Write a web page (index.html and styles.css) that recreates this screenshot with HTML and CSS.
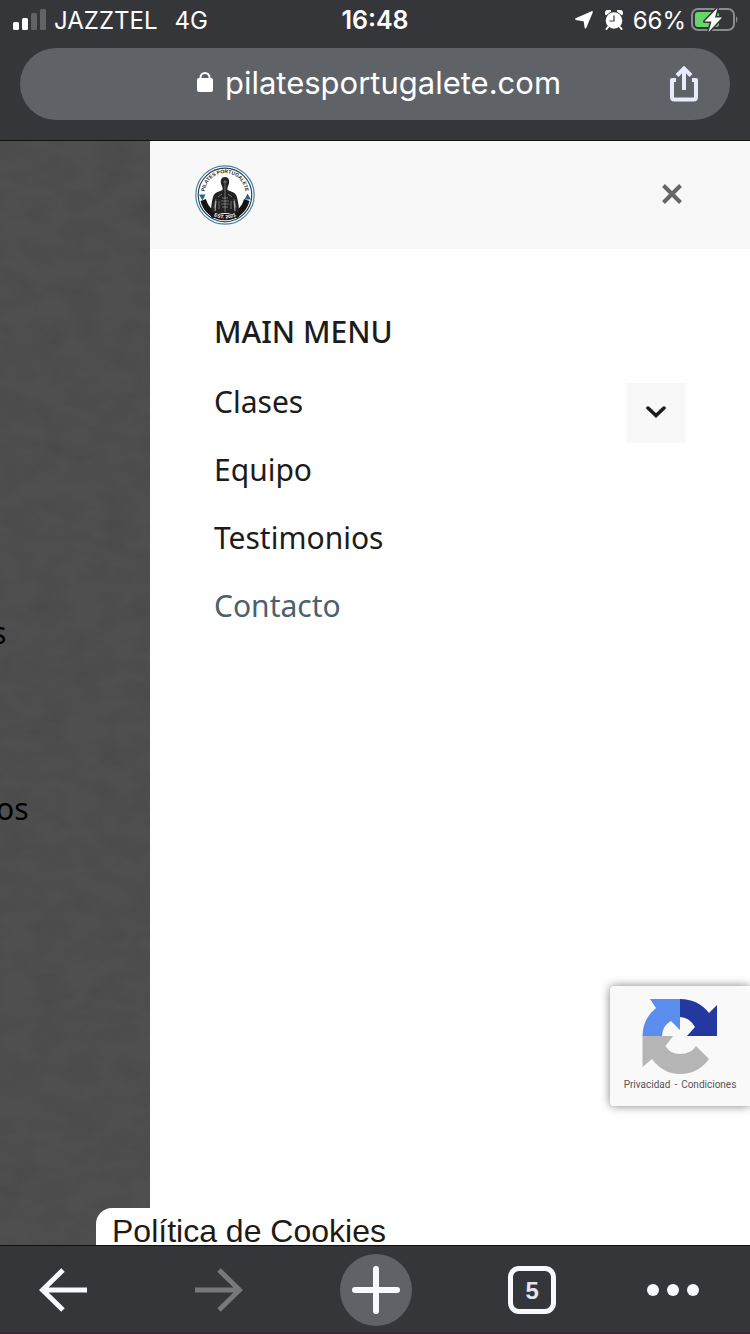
FILE: index.html
```
<!DOCTYPE html>
<html lang="es">
<head>
    <meta charset="UTF-8">
    <meta name="viewport" content="width=device-width, initial-scale=1.0">
    <title>Pilates Portugalete</title>
    <link rel="stylesheet" href="styles.css">
</head>
<body>

    <header class="browser-top">
        <div class="status-bar">
            <div class="status-left">
                <svg class="signal" width="34" height="22" viewBox="0 0 34 22">
                    <rect x="0" y="13" width="6" height="8" rx="1.5" fill="#fff"/>
                    <rect x="9" y="9" width="6" height="12" rx="1.5" fill="#fff"/>
                    <rect x="18" y="4" width="6" height="17" rx="1.5" fill="#626367"/>
                    <rect x="27" y="0" width="6" height="21" rx="1.5" fill="#626367"/>
                </svg>
                <span class="carrier">JAZZTEL</span>
                <span class="network">4G</span>
            </div>
            <span class="clock">16:48</span>
            <div class="status-right">
                <svg width="18" height="18" viewBox="0 0 18 18">
                    <path d="M17 1L10.500 16.500L9.500 9.500L1 8Z" fill="#fff" stroke="#fff" stroke-width="1.800" stroke-linejoin="round"/>
                </svg>
                <svg class="alarm" width="18" height="20" viewBox="0 0 18 20">
                    <path d="M1 5A3 3 0 0 1 6 1ZM17 5A3 3 0 0 0 12 1Z" fill="#fff" stroke="#fff"/>
                    <path d="M3 17L1.500 19M15 17L16.500 19" stroke="#fff" stroke-width="2" stroke-linecap="round"/>
                    <circle cx="9" cy="10.500" r="8.300" fill="#fff"/>
                    <path d="M9 5.500V11H4.500" fill="none" stroke="#35363a" stroke-width="1.200"/>
                </svg>
                <span class="percent">66%</span>
                <svg width="48" height="26" viewBox="0 0 48 26">
                    <rect x="1" y="2" width="42" height="21" rx="6" fill="none" stroke="#8a8b8e" stroke-width="2"/>
                    <path d="M45 9Q48 12.500 45 16Z" fill="#8a8b8e"/>
                    <rect x="4" y="5" width="24" height="15" rx="3" fill="#65d667"/>
                    <path d="M26.500 1L13.500 14.500H20.500L17.500 25L31 10.500H24Z" fill="#fff" stroke="#35363a" stroke-width="3" stroke-linejoin="round" paint-order="stroke"/>
                </svg>
            </div>
        </div>
        <div class="omnibox">
            <button class="url" type="button">
                <svg width="16" height="20" viewBox="0 0 16 20">
                    <rect x="0" y="6" width="16" height="14" rx="2" fill="#fff"/>
                    <path d="M3.500 8V5.500A4.500 4.500 0 0 1 12.500 5.500V8" fill="none" stroke="#fff" stroke-width="2"/>
                </svg>
                <span>pilatesportugalete.com</span>
            </button>
            <button class="share" type="button" aria-label="Compartir">
                <svg width="28" height="36" viewBox="0 0 28 36">
                    <path d="M6 14H2V31Q2 33.500 4.500 33.500H23.500Q26 33.500 26 31V14H22" fill="none" stroke="#e8ecfa" stroke-width="4" stroke-linejoin="round"/>
                    <path d="M14 24V3M7 9.500L14 2.500L21 9.500" fill="none" stroke="#e8ecfa" stroke-width="4"/>
                </svg>
            </button>
        </div>
    </header>

    <main class="viewport">
        <section class="page">
            <svg class="texture" width="100%" height="100%">
                <filter id="paper" x="0" y="0" width="100%" height="100%">
                    <feTurbulence type="fractalNoise" baseFrequency="0.03 0.05" numOctaves="3" seed="4"/>
                    <feColorMatrix values="0 0 0 0 0  0 0 0 0 0  0 0 0 0 0  0.12 0 0 0 -0.04"/>
                </filter>
                <rect width="100%" height="100%" filter="url(#paper)"/>
            </svg>
            <p class="page-text first">s</p>
            <p class="page-text second">os</p>
        </section>

        <aside class="drawer">
            <div class="drawer-header">
                <svg class="logo" width="60" height="60" viewBox="0 0 60 60">
                    <defs>
                        <path id="arc-top" d="M10.500 35A20.500 20.500 0 1 1 49.500 35"/>
                        <path id="arc-bottom" d="M10 43.500A25 25 0 0 0 50 43.500"/>
                        <clipPath id="logo-clip"><circle cx="30" cy="30" r="26"/></clipPath>
                    </defs>
                    <circle cx="30" cy="30" r="29.200" fill="#fff" stroke="#4d7f9f" stroke-width="1.200"/>
                    <circle cx="30" cy="30" r="26.800" fill="#fff" stroke="#24485e" stroke-width="1.200"/>
                    <path d="M5.500 36A25.200 25.200 0 0 0 54.500 36L49 34A19.500 19.500 0 0 1 11 34Z" fill="#141414"/>
                    <path d="M4 29.500H10.500L7.500 35.500ZM49.500 34.500H56L52.500 28.500Z" fill="#28658d"/>
                    <g clip-path="url(#logo-clip)">
                        <path d="M30 12C26.500 12 25.300 15 26 18.500L27.500 22.500V25L21.500 27.500C18 29 17.500 34 16.500 40L15.500 48H44.500L43.500 40C42.500 34 42 29 38.500 27.500L32.500 25V22.500L34 18.500C34.700 15 33.500 12 30 12Z" fill="#222"/>
                        <path d="M30 15V47M28 17H32M27 29L23 32M33 29L37 32M27 33H33M26 36H34M26 39H34M27 42H33M21 34L19 43M39 34L41 43M24 36V44M36 36V44" fill="none" stroke="#aaa" stroke-width="0.600"/>
                        <path d="M21 36L20 46M39 36L40 46" stroke="#fff" stroke-width="0.700"/>
                        <path d="M15 46Q30 54 45 46L44 53H16Z" fill="#141414"/>
                    </g>
                    <text class="logo-name"><textPath href="#arc-top" startOffset="50%">PILATES PORTUGALETE</textPath></text>
                    <text class="logo-year"><textPath href="#arc-bottom" startOffset="50%">EST. 2021</textPath></text>
                </svg>
                <button class="close" type="button" aria-label="Cerrar">
                    <svg width="20" height="22" viewBox="0 0 20 22">
                        <path d="M1.500 1.500L18.500 18.500M18.500 1.500L1.500 18.500" stroke="#666" stroke-width="4"/>
                    </svg>
                </button>
            </div>
            <nav class="menu">
                <h2>MAIN MENU</h2>
                <ul>
                    <li>
                        <a href="#">Clases</a>
                        <button class="toggle" type="button" aria-label="Abrir submenú">
                            <svg width="20" height="14" viewBox="0 0 20 14">
                                <path d="M2 2L10 9.500L18 2" fill="none" stroke="#1c1c1c" stroke-width="3.500" stroke-linecap="round"/>
                            </svg>
                        </button>
                    </li>
                    <li><a href="#">Equipo</a></li>
                    <li><a href="#">Testimonios</a></li>
                    <li><a href="#" class="active">Contacto</a></li>
                </ul>
            </nav>
        </aside>

        <div class="recaptcha">
            <svg width="76" height="78" viewBox="0 0 76 78">
                <path d="M38 0V31L29 22Q20 27 20 37H0.500Q0.500 20 14 9L8 0Z" fill="#5b8def"/>
                <path d="M38 0Q56 0 67 14L75 6V37H45L53 28Q47 18 38 18Z" fill="#2439a0"/>
                <path d="M0.500 37H31L23.500 47Q28 55 38 55Q49 55 54 47L67 60Q56 75 38 75Q21 75 10 60L0.500 68Z" fill="#b5b5b5"/>
            </svg>
            <p><a href="#">Privacidad</a><span>-</span><a href="#">Condiciones</a></p>
        </div>

        <button class="cookies" type="button">Política de Cookies</button>
    </main>

    <nav class="browser-bottom">
        <button type="button" aria-label="Atrás">
            <svg width="48" height="44" viewBox="0 0 48 44">
                <path d="M48 22H4M24 2L3.500 22L24 42" fill="none" stroke="#f8f9ff" stroke-width="5"/>
            </svg>
        </button>
        <button type="button" aria-label="Adelante" disabled>
            <svg width="48" height="44" viewBox="0 0 48 44">
                <path d="M0 22H44M24 2L44.500 22L24 42" fill="none" stroke="#78797c" stroke-width="5"/>
            </svg>
        </button>
        <button type="button" aria-label="Nueva pestaña">
            <span class="new-tab">
                <svg width="48" height="48" viewBox="0 0 48 48">
                    <path d="M24 3V45M3 24H45" stroke="#f8f9ff" stroke-width="6" stroke-linecap="round"/>
                </svg>
            </span>
        </button>
        <button type="button"><span class="tab-count">5</span></button>
        <button type="button" aria-label="Más">
            <svg width="52" height="12" viewBox="0 0 52 12" fill="#f8f9ff">
                <circle cx="6" cy="6" r="6"/>
                <circle cx="26" cy="6" r="6"/>
                <circle cx="46" cy="6" r="6"/>
            </svg>
        </button>
    </nav>

</body>
</html>
```
FILE: styles.css
```
* {
    box-sizing: border-box;
}
body {
    margin: 0;
    min-height: 100vh;
    display: flex;
    flex-direction: column;
    font-family: "Noto Sans", sans-serif;
    font-size: 30px;
    color: #1c1c1c;
    background-color: #35363a;
}
button {
    padding: 0;
    border: none;
    background: none;
    color: inherit;
    font: inherit;
    cursor: pointer;
}
svg {
    display: block;
    flex-shrink: 0;
}
a {
    color: inherit;
    text-decoration: none;
}

/* Browser header */
.browser-top {
    padding: 0 20px 20px;
    border-bottom: 1px solid #111;
    color: #fff;
    font-family: Inter, sans-serif;
}
.status-bar {
    display: grid;
    grid-template-columns: 1fr auto 1fr;
    align-items: center;
    height: 40px;
    margin: 0 -8px 8px;
    font-size: 24px;
}
.status-left,
.status-right {
    display: flex;
    align-items: center;
}
.signal {
    margin: 0 7px 0 1px;
}
.network {
    margin-left: 17px;
}
.clock {
    font-size: 25px;
    font-weight: 600;
}
.status-right {
    justify-content: flex-end;
    margin-right: -1px;
}
.alarm {
    margin: 0 10px 0 12px;
}
.percent {
    margin-right: 5px;
}
.omnibox {
    display: flex;
    align-items: center;
    height: 72px;
    padding: 0 32px 0 68px;
    border-radius: 36px;
    background-color: #5f6368;
}
.url {
    flex: 1;
    display: flex;
    align-items: center;
    justify-content: center;
    gap: 12px;
    padding-bottom: 4px;
    font-size: 31px;
}

/* Page and side menu */
.viewport {
    flex: 1;
    display: flex;
    position: relative;
    overflow: hidden;
}
.page {
    width: 20%;
    position: relative;
    overflow: hidden;
    background-color: #4f4f4f;
    color: #000;
}
.texture {
    position: absolute;
    top: 0;
    left: 0;
}
.page-text {
    position: relative;
    margin: 0;
    line-height: 40px;
}
.first {
    margin: 472px 0 136px -8px;
}
.second {
    margin-left: -4px;
}
.drawer {
    flex: 1;
    background-color: #fff;
}
.drawer-header {
    display: flex;
    align-items: center;
    justify-content: space-between;
    height: 108px;
    padding: 0 68px 0 45px;
    background-color: #f8f8f8;
}
.logo-name,
.logo-year {
    font-family: "Liberation Sans", sans-serif;
    font-size: 5px;
    font-weight: bold;
    text-anchor: middle;
}
.logo-name {
    fill: #222;
}
.logo-year {
    fill: #fff;
}
.menu {
    padding: 62px 64px;
}
.menu h2 {
    margin: 0;
    font-size: 30px;
    font-weight: 500;
    line-height: 42px;
}
.menu ul {
    margin: 15px 0 0;
    padding: 0;
    list-style: none;
}
.menu li {
    display: flex;
    justify-content: space-between;
    height: 68px;
    line-height: 68px;
}
.menu .active {
    color: #4b616d;
}
.toggle {
    display: flex;
    align-items: center;
    justify-content: center;
    width: 60px;
    height: 60px;
    margin-top: 15px;
    background-color: #f8f8f8;
}

/* Floating boxes */
.recaptcha {
    position: absolute;
    right: 0;
    bottom: 139px;
    width: 140px;
    height: 120px;
    padding-top: 13px;
    border-radius: 4px 0 0 4px;
    background-color: #f9f9f9;
    box-shadow: 0 0 10px #808080;
}
.recaptcha svg {
    margin: 0 auto;
}
.recaptcha p {
    margin: 0;
    font: 10px/16px Roboto, sans-serif;
    text-align: center;
    color: #555;
}
.recaptcha span {
    margin: 0 4px;
}
.cookies {
    position: absolute;
    left: 96px;
    bottom: 0;
    height: 37px;
    padding: 7px 16px 0;
    border-radius: 16px 16px 0 0;
    background-color: #fff;
    color: #1f1a14;
    font-family: "Liberation Sans", sans-serif;
    font-size: 32px;
    line-height: 32px;
}

/* Browser toolbar */
.browser-bottom {
    display: grid;
    grid-template-columns: 4fr 6fr 4fr 6fr 3fr;
    height: 89px;
    padding: 2px 30px 0 0;
    border-top: 1px solid #111;
    border-bottom: 2px solid #3b2a35;
    background-color: #35363a;
}
.browser-bottom button {
    display: flex;
    align-items: center;
    justify-content: center;
}
.new-tab {
    display: flex;
    align-items: center;
    justify-content: center;
    width: 72px;
    height: 72px;
    border-radius: 50%;
    background-color: #5f6368;
}
.tab-count {
    width: 48px;
    height: 48px;
    border: 5px solid #f8f9ff;
    border-radius: 11px;
    color: #e4e5ea;
    font: bold 24px/40px "Liberation Sans", sans-serif;
}
```
